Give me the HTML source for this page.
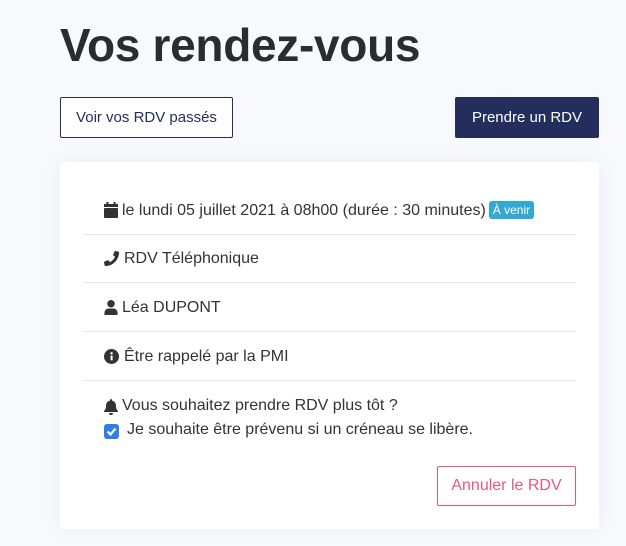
<!DOCTYPE html>
<html><head><meta charset="utf-8"><style>
body{margin:0;background:#f8f9fd;font-family:"Liberation Sans",sans-serif;color:#333;width:626px;height:546px;overflow:hidden;position:relative}
h1{position:absolute;left:60px;top:18px;margin:0;font-size:46px;font-weight:bold;color:#2c2c30;letter-spacing:-0.3px}
.btn{position:absolute;box-sizing:border-box;font-size:15px;display:flex;align-items:center;justify-content:center;border-radius:2px}
.b1{left:60px;top:97px;width:173px;height:41px;border:1px solid #232e5c;color:#232e5c;background:#fff}
.b2{left:455px;top:97px;width:144px;height:41px;background:#232e5c;color:#fff}
.card{position:absolute;left:60px;top:162px;width:539px;height:367px;background:#fff;border-radius:3px;box-shadow:0 0 20px rgba(30,40,90,0.06)}
.row{position:absolute;left:24px;width:492px;border-bottom:1px solid #e3e6ea;font-size:16px;color:#333}
.row span.t{position:absolute;left:40px;white-space:nowrap}
svg{position:absolute;left:20px;fill:#333}
.badge{background:#33a8d1;color:#fff;font-size:12px;padding:2px 4px;border-radius:3px;margin-left:3px;position:relative;top:-1px}
.ann{left:377px;top:304px;width:139px;height:40px;border:1px solid #e8587a;color:#e8587a;background:#fff;font-size:16px}
</style></head><body>
<h1>Vos rendez-vous</h1>
<div class="btn b1">Voir vos RDV passés</div>
<div class="btn b2">Prendre un RDV</div>
<div class="card">
<div class="row" style="top:0;height:72px">
<svg style="top:40px" width="14" height="16" viewBox="0 0 14 16"><rect x="0" y="2" width="14" height="3"/><rect x="2.5" y="0" width="2" height="3"/><rect x="9.5" y="0" width="2" height="3"/><rect x="0" y="6" width="14" height="10" rx="1"/></svg>
<span class="t" style="top:40px;left:38px">le lundi 05 juillet 2021 à 08h00 (durée : 30 minutes)<span class="badge">À venir</span></span></div>
<div class="row" style="top:72px;height:48px">
<svg style="top:17px" width="15" height="15" viewBox="0 0 16 16"><path d="M15.5 11.3l-3.4-1.5c-.3-.1-.7 0-.9.2l-1.5 1.8C7.3 10.6 5.4 8.7 4.2 6.3L6 4.8c.2-.2.3-.6.2-.9L4.7.5C4.5.1 4.1-.1 3.7 0L.6.7C.2.8 0 1.2 0 1.5 0 9.5 6.5 16 14.5 16c.4 0 .7-.2.8-.6l.7-3.1c.1-.4-.1-.8-.5-1z" transform="scale(-1,1) translate(-16,0)"/></svg>
<span class="t" style="top:16px">RDV Téléphonique</span></div>
<div class="row" style="top:121px;height:48px">
<svg style="top:17px" width="14" height="15" viewBox="0 0 14 16"><circle cx="7" cy="4" r="4"/><path d="M0 16v-2c0-3 2-5 4.5-5h5C12 9 14 11 14 14v2z"/></svg>
<span class="t" style="top:16px;left:38px">Léa DUPONT</span></div>
<div class="row" style="top:170px;height:48px">
<svg style="top:17px" width="15" height="15" viewBox="0 0 16 16"><circle cx="8" cy="8" r="8"/><rect x="7" y="7" width="2.2" height="5" fill="#fff"/><circle cx="8.1" cy="4.6" r="1.3" fill="#fff"/></svg>
<span class="t" style="top:16px">Être rappelé par la PMI</span></div>
<div style="position:absolute;left:24px;top:235px;font-size:16px">
<svg style="top:2px" width="14" height="16" viewBox="0 0 14 16"><path d="M7 0c.6 0 1 .4 1 1v.6c2.3.5 4 2.5 4 4.9 0 3.5 1 4.6 2 5.5v1H0v-1c1-.9 2-2 2-5.5 0-2.4 1.7-4.4 4-4.9V1c0-.6.4-1 1-1zM5 14h4a2 2 0 0 1-4 0z"/></svg>
<span style="position:absolute;left:38px;top:0;white-space:nowrap">Vous souhaitez prendre RDV plus tôt ?</span>
<svg style="top:27px;left:20px" width="15" height="15" viewBox="0 0 15 15"><rect width="15" height="15" rx="3" fill="#2f7fe0"/><path d="M3.5 7.5l3 3 5-6" stroke="#fff" stroke-width="2.2" fill="none"/></svg>
<span style="position:absolute;left:43px;top:24px;white-space:nowrap">Je souhaite être prévenu si un créneau se libère.</span></div>
<div class="btn ann">Annuler le RDV</div>
</div>
</body></html>
